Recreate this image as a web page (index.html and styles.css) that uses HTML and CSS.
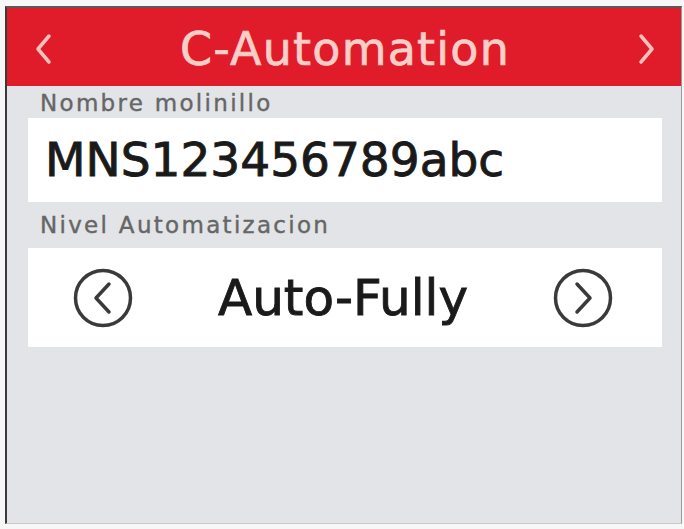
FILE: index.html
```html
<!DOCTYPE html>
<html>
<head>
    <meta charset="utf-8">
    <link rel="stylesheet" href="styles.css">
</head>
<body>
    <div class="screen">
        <div class="header">
            <svg class="nav-arrow" width="20" height="32" viewBox="0 0 20 32">
                <polyline points="16,3 5,16 16,29" />
            </svg>
            <h1 class="title">C-Automation</h1>
            <svg class="nav-arrow" width="20" height="32" viewBox="0 0 20 32">
                <polyline points="4,3 15,16 4,29" />
            </svg>
        </div>

        <div class="field-label">Nombre molinillo</div>
        <div class="field-box name-box">MNS123456789abc</div>

        <div class="field-label second">Nivel Automatizacion</div>
        <div class="field-box level-box">
            <svg class="round-btn" width="60" height="60" viewBox="0 0 60 60">
                <circle cx="30" cy="30" r="27.5" />
                <polyline points="36,16 23,30 36,44" />
            </svg>
            <span class="level-value">Auto-Fully</span>
            <svg class="round-btn" width="60" height="60" viewBox="0 0 60 60">
                <circle cx="30" cy="30" r="27.5" />
                <polyline points="24,16 37,30 24,44" />
            </svg>
        </div>
    </div>
</body>
</html>
```

FILE: styles.css
```css
body {
    margin: 0;
    background: #f7f7f7;
    font-family: "DejaVu Sans", "Noto Sans", sans-serif;
}

.screen {
    margin: 6px 2px 0 5px;
    height: 518px;
    background: #e2e4e7;
    border-left: 2px solid #3a3a3a;
    border-top: 2px solid #5a5a5a;
    border-right: 1px solid #9a9a9a;
    border-bottom: 1px solid #c8c8c8;
    box-sizing: border-box;
}

.header {
    height: 78px;
    background: #e01c2b;
    display: flex;
    align-items: center;
    padding: 4px 24px 0 26px;
    box-sizing: border-box;
}

.title {
    flex: 1;
    margin: 0;
    text-align: center;
    font-size: 46px;
    font-weight: normal;
    letter-spacing: 1.2px;
    color: #f7cfc8;
    -webkit-text-stroke: 0.7px #f7cfc8;
}

.nav-arrow polyline {
    fill: none;
    stroke: #f4c2bb;
    stroke-width: 3.5;
    stroke-linecap: round;
    stroke-linejoin: round;
}

.field-label {
    padding: 2px 0 0 33px;
    line-height: 30px;
    font-size: 23px;
    letter-spacing: 2.3px;
    color: #666666;
    -webkit-text-stroke: 0.4px #666666;
}

.field-label.second {
    padding-top: 0;
    line-height: 46px;
}

.field-box {
    margin: 0 19px 0 21px;
    background: #ffffff;
}

.name-box {
    height: 84px;
    line-height: 84px;
    padding-left: 17px;
    font-size: 47px;
    color: #1a1a1a;
    -webkit-text-stroke: 0.9px #1a1a1a;
}

.level-box {
    height: 99px;
    display: flex;
    align-items: center;
    justify-content: space-between;
    padding: 0 49px 0 45px;
}

.level-value {
    font-size: 50px;
    color: #1a1a1a;
    -webkit-text-stroke: 0.9px #1a1a1a;
}

.round-btn circle,
.round-btn polyline {
    fill: none;
    stroke: #3a3a3a;
    stroke-width: 3.5;
    stroke-linecap: round;
    stroke-linejoin: round;
}
```
